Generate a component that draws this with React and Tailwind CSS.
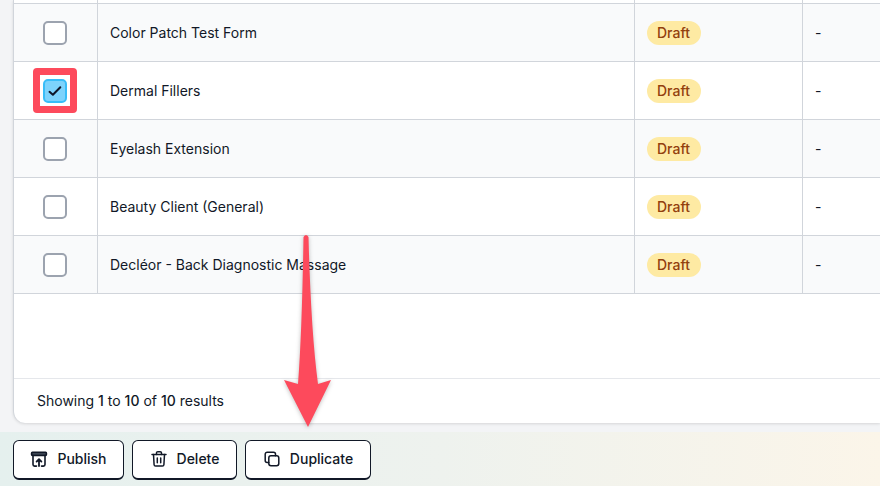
const rows = ['Color Patch Test Form', 'Dermal Fillers', 'Eyelash Extension', 'Beauty Client (General)', 'Decléor - Back Diagnostic Massage']

function Checkbox({ checked }) {
  if (checked) {
    return (
      <div className="relative w-6 h-6 rounded-[5px] border-2 border-[#38bdf8] bg-[#7dd3fc] flex items-center justify-center">
        <div className="absolute -left-3 -right-3 -top-[13px] -bottom-3 border-[7px] border-[#fd4a5c] rounded-[4px]" />
        <svg width="16" height="16" viewBox="0 0 16 16" fill="none" stroke="#0f172a" strokeWidth="2" strokeLinecap="round" strokeLinejoin="round">
          <path d="M2.5 8.8l3.4 3 7.4-7.6" />
        </svg>
      </div>
    )
  }
  return <div className="w-6 h-6 rounded-[5px] border-2 border-[#9ca3af] bg-white" />
}

function Row({ name, index }) {
  return (
    <div className={`flex h-[58px] border-b border-[#d1d5db] text-sm text-[#111827] ${index % 2 === 0 ? 'bg-[#f9fafb]' : 'bg-white'}`}>
      <div className="w-[84px] shrink-0 flex items-center justify-center pr-px border-r border-[#d1d5db]">
        <Checkbox checked={index === 1} />
      </div>
      <div className="w-[537px] shrink-0 flex items-center pl-3 border-r border-[#d1d5db]">{name}</div>
      <div className="w-[168px] shrink-0 flex items-center pl-3 border-r border-[#d1d5db]">
        <span className="h-6 pl-[10px] pr-[11px] rounded-full bg-[#feeaa3] text-[#92400e] font-medium flex items-center">Draft</span>
      </div>
      <div className="flex-1 flex items-center pl-3">-</div>
    </div>
  )
}

function PublishIcon() {
  return (
    <svg width="18" height="18" viewBox="0 0 18 18" fill="none" stroke="#111827" strokeWidth="1.6" strokeLinecap="round" strokeLinejoin="round">
      <rect x="1.6" y="2.4" width="14.8" height="3" rx="0.8" fill="#4b5563" />
      <path d="M3 5.5v9a1.6 1.6 0 0 0 1.6 1.6h1.9M15 5.5v9a1.6 1.6 0 0 1-1.6 1.6h-1.9" />
      <path d="M9 16v-6.5M6.6 11.6L9 9.2l2.4 2.4" strokeWidth="1.8" />
    </svg>
  )
}

function TrashIcon() {
  return (
    <svg width="18" height="18" viewBox="0 0 18 18" fill="none" stroke="#111827" strokeWidth="1.5" strokeLinecap="round" strokeLinejoin="round">
      <path d="M2 4.5h14" />
      <path d="M6.5 4.5V3a1.3 1.3 0 0 1 1.3-1.3h2.4A1.3 1.3 0 0 1 11.5 3v1.5" />
      <path d="M3.5 4.5l.6 10.2a1.5 1.5 0 0 0 1.5 1.4h6.8a1.5 1.5 0 0 0 1.5-1.4l.6-10.2" />
      <path d="M7.3 8v4.8M10.7 8v4.8" />
    </svg>
  )
}

function CopyIcon() {
  return (
    <svg width="18" height="18" viewBox="0 0 18 18" fill="none" stroke="#111827" strokeWidth="1.5" strokeLinecap="round" strokeLinejoin="round">
      <rect x="5.8" y="5.8" width="10" height="10" rx="2.2" />
      <path d="M12.5 5.8V4.2a2 2 0 0 0-2-2H4.2a2 2 0 0 0-2 2v6.3a2 2 0 0 0 2 2h1.6" />
    </svg>
  )
}

function ActionButton({ icon, label, width }) {
  return (
    <button className={`${width} h-10 pb-px rounded-md bg-white border border-[#111827] border-b-2 flex items-center justify-center gap-[9px] text-sm font-medium text-[#111827]`}>
      {icon}
      {label}
    </button>
  )
}

export default function App() {
  return (
    <div className="relative h-[486px] w-[880px] overflow-hidden bg-[#f3f4f6] flex flex-col" style={{ fontFamily: 'Inter, sans-serif' }}>
      <div className="ml-[13px] h-[423px] shrink-0 bg-white rounded-bl-xl shadow-[0_1px_3px_rgba(0,0,0,0.12)] border-l border-[#d1d5db] flex flex-col">
        <div className="flex h-[4px] border-b border-[#d1d5db] bg-white">
          <div className="w-[84px] border-r border-[#d1d5db]" />
          <div className="w-[537px] border-r border-[#d1d5db]" />
          <div className="w-[168px] border-r border-[#d1d5db]" />
        </div>
        {rows.map((name, i) => (
          <Row key={name} name={name} index={i} />
        ))}
        <div className="flex-1" />
        <div className="h-[45px] border-t border-[#e5e7eb] flex items-center pl-[23px] text-sm text-[#111827]">
          <span>Showing <span className="font-medium">1</span> to <span className="font-medium">10</span> of <span className="font-medium">10</span> results</span>
        </div>
      </div>

      <div className="mt-[9px] flex-1 flex items-start gap-2 pl-[13px] pt-2 bg-gradient-to-r from-[#e5f0ee] via-[#eef2ee] to-[#fbf5e9]">
        <ActionButton icon={<PublishIcon />} label="Publish" width="w-[111px]" />
        <ActionButton icon={<TrashIcon />} label="Delete" width="w-[105px]" />
        <ActionButton icon={<CopyIcon />} label="Duplicate" width="w-[126px]" />
      </div>

      {/* annotation arrow */}
      <svg className="absolute left-[280px] top-[232px] drop-shadow-[0_1px_2px_rgba(0,0,0,0.25)]" width="56" height="200" viewBox="0 0 56 200">
        <path d="M23.5 5 Q26 1 28.5 5 Q31 100 38 152 L51 148 L28 195 L4 148 L18 152 Q22 100 23.5 5 Z" fill="#fd4a5c" />
      </svg>
    </div>
  )
}
